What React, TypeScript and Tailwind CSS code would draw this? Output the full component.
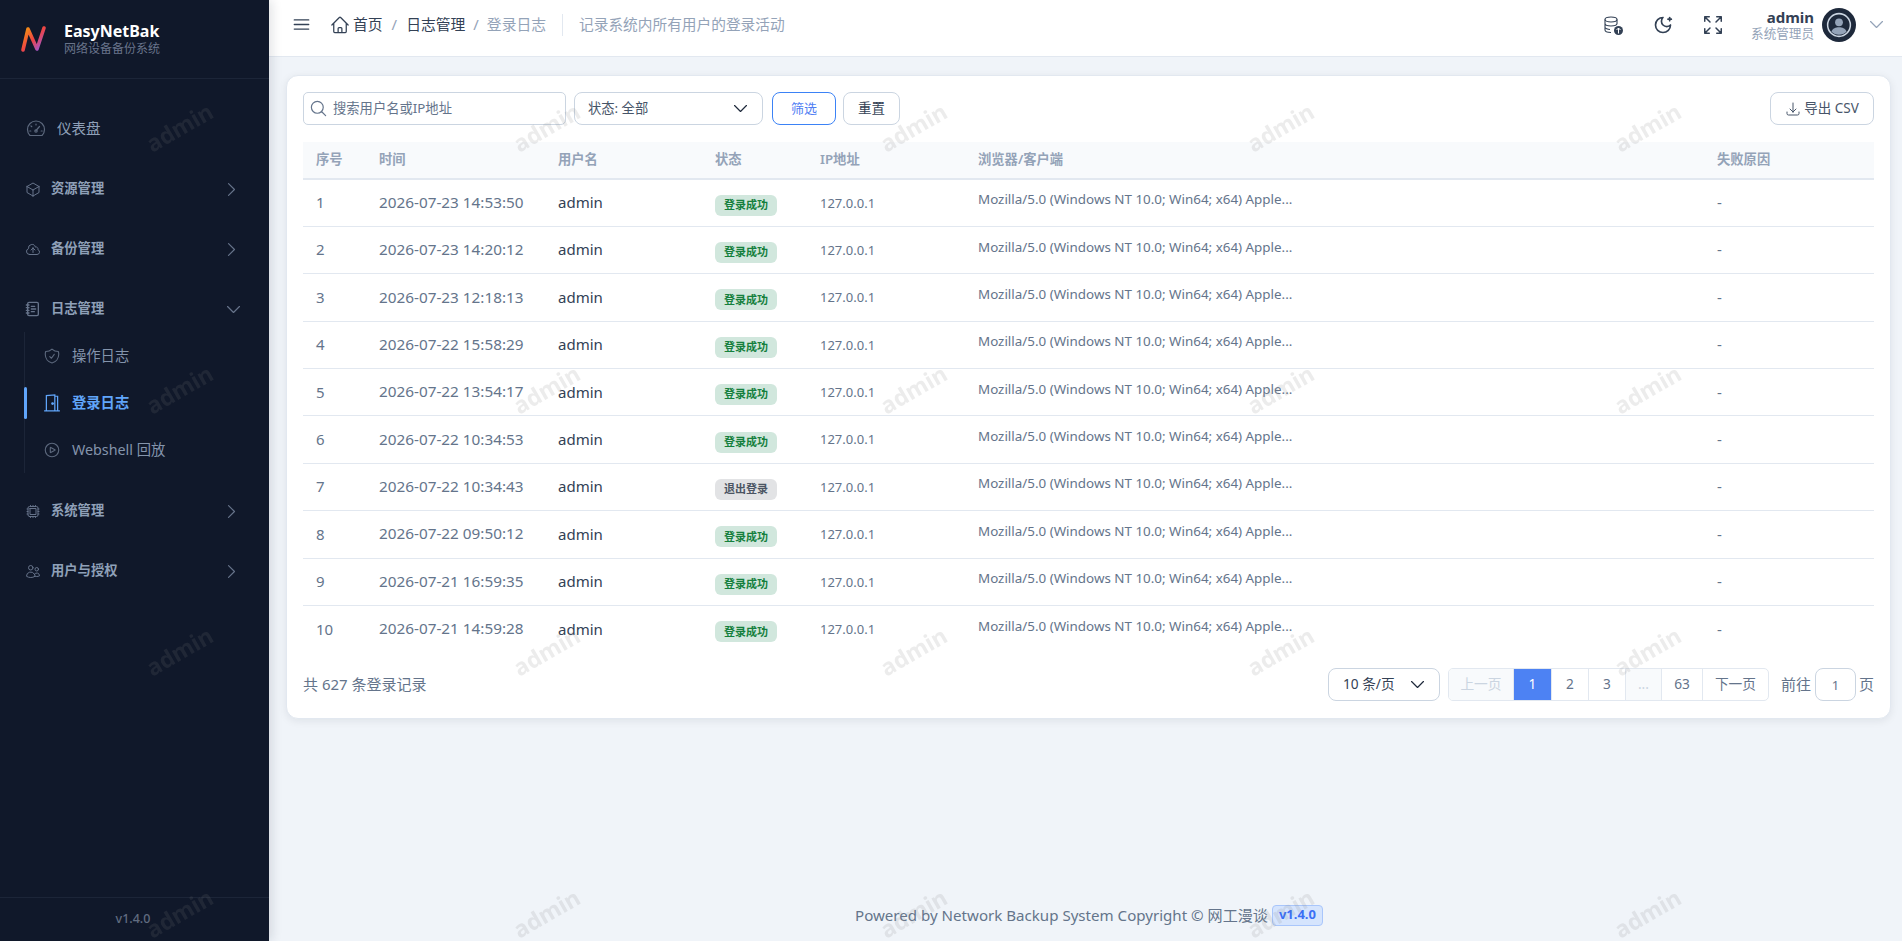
import { ReactNode } from 'react';
import {
  HiOutlineArrowDownTray,
  HiOutlineArrowsPointingOut,
  HiOutlineBars3,
  HiOutlineChevronDown,
  HiOutlineChevronRight,
  HiOutlineCloudArrowUp,
  HiOutlineCpuChip,
  HiOutlineCube,
  HiOutlineHome,
  HiOutlineMagnifyingGlass,
  HiOutlinePlayCircle,
  HiOutlineShieldCheck,
  HiOutlineUsers,
} from 'react-icons/hi2';
import { LuMoonStar, LuNotebookText } from 'react-icons/lu';

const logs = [
  ['1', '2026-07-23 14:53:50', '登录成功'],
  ['2', '2026-07-23 14:20:12', '登录成功'],
  ['3', '2026-07-23 12:18:13', '登录成功'],
  ['4', '2026-07-22 15:58:29', '登录成功'],
  ['5', '2026-07-22 13:54:17', '登录成功'],
  ['6', '2026-07-22 10:34:53', '登录成功'],
  ['7', '2026-07-22 10:34:43', '退出登录'],
  ['8', '2026-07-22 09:50:12', '登录成功'],
  ['9', '2026-07-21 16:59:35', '登录成功'],
  ['10', '2026-07-21 14:59:28', '登录成功'],
];

function GaugeIcon() {
  return (
    <svg viewBox="0 0 20 20" className="w-[20px] h-[20px]" fill="none" stroke="currentColor" strokeWidth="1.2" strokeLinecap="round">
      <path d="M4 16.5h12a8.500 8.500 0 1 0-12 0Z" />
      <path d="M10 11.500l3.500-4M10 5v1M5 7l.8.7M3.800 12h1M15.200 12h1" />
      <circle cx="10" cy="12" r="1.200" />
    </svg>
  );
}

function DoorIcon() {
  return (
    <svg viewBox="0 0 16 16" className="w-[18px] h-[18px]" fill="none" stroke="currentColor" strokeWidth="1.100">
      <path d="M1 15h14M3 15V1.500L10.500.8V15M10.500 2H13v13" />
      <circle cx="8.500" cy="8.500" r=".7" fill="currentColor" />
    </svg>
  );
}

function NavGroup({ icon, label, open }: { icon: ReactNode; label: string; open?: boolean }) {
  return (
    <div className="h-[60px] flex items-center pl-[25px] pr-[28px] text-[#8fa0b8]">
      <span className="w-[16px] flex justify-center text-[#66738a] text-[21px]">{icon}</span>
      <span className="ml-[10px] text-[13.300px] font-semibold flex-1">{label}</span>
      {open ? (
        <HiOutlineChevronDown className="text-[#66738a] text-[19px] -mr-[2px]" />
      ) : (
        <HiOutlineChevronRight className="text-[#66738a] text-[19px]" />
      )}
    </div>
  );
}

function SubItem({ icon, label, active }: { icon: ReactNode; label: string; active?: boolean }) {
  return (
    <div className={`relative h-[47px] flex items-center pl-[18px] text-[14.300px] ${active ? 'text-[#60a5fa] font-bold' : 'text-[#8494ac]'}`}>
      {active && <span className="absolute -left-px top-[8px] w-[3px] h-[32px] rounded-sm bg-[#60a5fa]" />}
      <span className={`w-[18px] flex justify-center text-[22px] ${active ? 'text-[#60a5fa]' : 'text-[#5c687d]'}`}>{icon}</span>
      <span className="ml-[11px]">{label}</span>
    </div>
  );
}

function Sidebar() {
  return (
    <aside className="w-[269px] shrink-0 h-full bg-[#10182a] flex flex-col shadow-[3px_0_10px_rgba(15,23,42,0.12)] z-10">
      <div className="h-[79px] shrink-0 border-b border-[#1c2538] flex items-center pl-[20px]">
        <svg viewBox="0 0 28 28" className="w-[28px] h-[28px]" fill="none">
          <defs>
            <linearGradient id="logo" x1="0" y1="0" x2="1" y2="1">
              <stop offset="0" stopColor="#f59e0b" />
              <stop offset="0.5" stopColor="#ef4444" />
              <stop offset="1" stopColor="#8b5cf6" />
            </linearGradient>
          </defs>
          <path d="M3 25 8 4l9 20L24 3" stroke="url(#logo)" strokeWidth="3.600" strokeLinejoin="round" strokeLinecap="round" />
        </svg>
        <div className="ml-[16px] -mt-[2px]">
          <div className="text-white text-[16px] font-bold leading-[20px]">EasyNetBak</div>
          <div className="text-[#69748a] text-[12px] leading-[15px]">网络设备备份系统</div>
        </div>
      </div>
      <nav className="flex-1 pt-[20px]">
        <div className="h-[60px] flex items-center pl-[26px] text-[#8fa0b8]">
          <span className="text-[#5c687d]"><GaugeIcon /></span>
          <span className="ml-[11px] text-[14.500px]">仪表盘</span>
        </div>
        <NavGroup icon={<HiOutlineCube />} label="资源管理" />
        <NavGroup icon={<HiOutlineCloudArrowUp />} label="备份管理" />
        <NavGroup icon={<LuNotebookText className="text-[16px]" />} label="日志管理" open />
        <div className="ml-[24px] mb-[8px] border-l border-[#1c2538] -mt-[7px]">
          <SubItem icon={<HiOutlineShieldCheck />} label="操作日志" />
          <SubItem icon={<DoorIcon />} label="登录日志" active />
          <SubItem icon={<HiOutlinePlayCircle />} label="Webshell 回放" />
        </div>
        <NavGroup icon={<HiOutlineCpuChip />} label="系统管理" />
        <NavGroup icon={<HiOutlineUsers />} label="用户与授权" />
      </nav>
      <div className="h-[44px] shrink-0 border-t border-[#1c2538] flex items-center justify-center pr-[3px] text-[#616c80] text-[12.500px] font-medium">
        v1.4.0
      </div>
    </aside>
  );
}

function Header() {
  return (
    <header className="h-[57px] shrink-0 bg-white border-b border-[#e2e8f0] flex items-center pl-[22px] pr-[16px] pb-[7px]">
      <HiOutlineBars3 className="text-[#334155] text-[21px]" />
      <HiOutlineHome className="ml-[18px] text-[#334155] text-[20px]" />
      <span className="ml-[3px] text-[14.800px] text-[#334155]">首页</span>
      <span className="mx-[9px] text-[14.800px] text-[#94a3b8]">/</span>
      <span className="text-[14.800px] text-[#334155]">日志管理</span>
      <span className="mx-[8px] text-[14.800px] text-[#94a3b8]">/</span>
      <span className="text-[14.800px] text-[#94a3b8]">登录日志</span>
      <span className="ml-[16px] w-px h-[22px] bg-[#e2e8f0]" />
      <span className="ml-[16px] text-[14.700px] text-[#94a3b8]">记录系统内所有用户的登录活动</span>
      <div className="ml-auto flex items-center">
        <span className="relative w-[18px] h-[18px]">
          <svg viewBox="0 0 18 18" className="w-[18px] h-[18px] text-[#334155]" fill="none" stroke="currentColor" strokeWidth="1.100">
            <ellipse cx="8" cy="3.500" rx="6" ry="2.500" />
            <path d="M2 3.500v10.500c0 1.400 2.700 2.500 6 2.500M14 3.500V8M2 7.500c0 1.400 2.700 2.500 6 2.500s6-1.100 6-2.500M2 11c0 1.400 2.700 2.500 5 2.500" />
          </svg>
          <span className="absolute right-[-2px] bottom-[-1px] w-[9px] h-[9px] rounded-full bg-[#334155] flex items-center justify-center">
            <svg viewBox="0 0 9 9" className="w-[9px] h-[9px]" fill="none" stroke="white" strokeWidth="1">
              <path d="M4.500 7.500V2M2.500 4l2-2 2 2" />
            </svg>
          </span>
        </span>
        <LuMoonStar className="ml-[32px] text-[#334155] text-[20px]" />
        <HiOutlineArrowsPointingOut className="ml-[28px] text-[#334155] text-[24px]" />
        <div className="ml-[26px] text-right">
          <div className="text-[15px] font-bold text-[#334155] leading-[18px]">admin</div>
          <div className="text-[12.600px] text-[#94a3b8] leading-[16px]">系统管理员</div>
        </div>
        <div className="ml-[8px] w-[34px] h-[34px] rounded-full bg-[#1e293b] flex items-center justify-center">
          <svg viewBox="0 0 24 24" className="w-[26px] h-[26px]" fill="none">
            <circle cx="12" cy="12" r="10.500" stroke="#cbd5e1" strokeWidth="1.400" />
            <circle cx="12" cy="9.500" r="3.600" fill="#94a3b8" />
            <path d="M5 18c1.200-3 4-4 7-4s5.800 1 7 4c-1.800 2-4.300 3-7 3s-5.200-1-7-3Z" fill="#94a3b8" />
          </svg>
        </div>
        <HiOutlineChevronDown className="ml-[11px] text-[#94a3b8] text-[19px]" />
      </div>
    </header>
  );
}

function StatusTag({ text }: { text: string }) {
  const ok = text === '登录成功';
  return (
    <span className={`inline-flex items-center justify-center w-[62px] h-[21px] rounded-[6px] text-[11px] font-bold ${ok ? 'bg-[#d1e7dd] text-[#15803d]' : 'bg-[#e2e3e5] text-[#4b5563]'}`}>
      {text}
    </span>
  );
}

function LogTable() {
  const headCell = 'pl-[13px] text-left font-semibold';
  return (
    <table className="w-full table-fixed border-collapse mt-[17px]">
      <colgroup>
        <col className="w-[63px]" />
        <col className="w-[179px]" />
        <col className="w-[157px]" />
        <col className="w-[105px]" />
        <col className="w-[158px]" />
        <col className="w-[739px]" />
        <col />
      </colgroup>
      <thead>
        <tr className="h-[37px] bg-[#f8fafc] border-b-2 border-[#e2e8f0] text-[13.300px] text-[#94a3b8]">
          <th className={headCell}>序号</th>
          <th className={headCell}>时间</th>
          <th className={headCell}>用户名</th>
          <th className={headCell}>状态</th>
          <th className={headCell}>IP地址</th>
          <th className={headCell}>浏览器/客户端</th>
          <th className={headCell}>失败原因</th>
        </tr>
      </thead>
      <tbody>
        {logs.map(([id, time, status]) => (
          <tr key={id} className="h-[47.400px] border-b border-[#e2e8f0] last:border-b-0">
            <td className="pl-[13px] pb-px text-[15px] text-[#64748b]">{id}</td>
            <td className="pl-[13px] pb-px text-[15.300px] text-[#64748b]">{time}</td>
            <td className="pl-[13px] pb-px text-[15px] text-[#334155]">admin</td>
            <td className="pl-[13px] pt-px"><StatusTag text={status} /></td>
            <td className="pl-[13px] pt-px text-[13px] text-[#64748b]">127.0.0.1</td>
            <td className="pl-[13px] pb-[7px] text-[13.400px] text-[#64748b]">Mozilla/5.0 (Windows NT 10.0; Win64; x64) Apple...</td>
            <td className="pl-[13px] pb-px text-[15px] text-[#64748b]">-</td>
          </tr>
        ))}
      </tbody>
    </table>
  );
}

function PageButton({ w, active, muted, children }: { w: string; active?: boolean; muted?: boolean; children: ReactNode }) {
  let color = 'text-[#64748b]';
  if (active) color = 'bg-[#4d82f3] text-white';
  if (muted) color = 'bg-[#f8fafc] text-[#cbd5e1]';
  return <span className={`${w} h-full flex items-center justify-center border-r border-[#e2e8f0] last:border-r-0 ${color}`}>{children}</span>;
}

function Footer() {
  return (
    <div className="mt-auto h-[50px] shrink-0 flex items-center justify-center text-[15.100px] text-[#64748b] pb-[2px] pl-[7px]">
      <span>Powered by Network Backup System Copyright © 网工漫谈</span>
      <span className="ml-[4px] h-[21px] px-[6px] rounded-[4px] border border-[#a9c6fb] bg-[#d5e4fd] text-[#3b6ff5] text-[13px] font-bold flex items-center">v1.4.0</span>
    </div>
  );
}

function Watermarks() {
  return (
    <div className="fixed inset-0 overflow-hidden pointer-events-none z-20">
      <div className="grid grid-cols-[repeat(5,367px)] auto-rows-[262px] -ml-[4px] -mt-[4px]">
        {Array.from({ length: 20 }).map((_, i) => (
          <div key={i} className="flex items-center justify-center">
            <span className="-rotate-[30deg] text-[23px] font-bold text-[#80808026]">admin</span>
          </div>
        ))}
      </div>
    </div>
  );
}

export default function App() {
  return (
    <div className="relative h-[941px] flex overflow-hidden bg-[#f0f4f9] font-['Noto_Sans','Noto_Sans_CJK_SC',sans-serif]">
      <Sidebar />
      <main className="flex-1 min-w-0 flex flex-col">
        <Header />
        <section className="ml-[17px] mr-[11px] mt-[18px] h-[644px] rounded-[12px] bg-white border border-[#e2e8f0] shadow-[0_2px_8px_rgba(15,23,42,0.08)] px-[16px] pt-[16px]">
          <div className="flex items-center h-[33px]">
            <div className="w-[263px] h-[33px] flex items-center border border-[#cbd5e1] rounded-[5px] pl-[5px] text-[13.300px] text-[#64748b]">
              <HiOutlineMagnifyingGlass className="text-[#64748b] text-[19px]" />
              <span className="ml-[5px]">搜索用户名或IP地址</span>
            </div>
            <div className="ml-[8px] w-[189px] h-[33px] flex items-center justify-between border border-[#cbd5e1] rounded-[8px] pl-[13px] pr-[12px] text-[13.300px] text-[#475569]">
              <span>状态: 全部</span>
              <HiOutlineChevronDown className="text-[#1e293b] text-[19px]" />
            </div>
            <button className="ml-[9px] w-[64px] h-[33px] rounded-[8px] border border-[#3b82f6] text-[13px] text-[#4f7df3]">筛选</button>
            <button className="ml-[7px] w-[57px] h-[33px] rounded-[8px] border border-[#cbd5e1] text-[13.500px] text-[#334155]">重置</button>
            <button className="ml-auto w-[104px] h-[33px] rounded-[8px] border border-[#cbd5e1] flex items-center justify-center text-[13.500px] text-[#475569]">
              <HiOutlineArrowDownTray className="text-[16px] mr-[3px]" />
              导出 CSV
            </button>
          </div>
          <LogTable />
          <div className="mt-[15px] h-[33px] flex items-center text-[15px] text-[#64748b]">
            <span>共 627 条登录记录</span>
            <div className="ml-auto w-[112px] h-[33px] flex items-center justify-between border border-[#cbd5e1] rounded-[8px] pl-[14px] pr-[12px] text-[#334155] text-[13.700px]">
              <span>10 条/页</span>
              <HiOutlineChevronDown className="text-[#1e293b] text-[19px]" />
            </div>
            <div className="ml-[8px] h-[33px] flex items-stretch border border-[#e2e8f0] rounded-[5px] overflow-hidden text-[13.700px]">
              <PageButton w="w-[65px]" muted>上一页</PageButton>
              <PageButton w="w-[38px]" active>1</PageButton>
              <PageButton w="w-[37px]">2</PageButton>
              <PageButton w="w-[37px]">3</PageButton>
              <PageButton w="w-[36px]" muted>...</PageButton>
              <PageButton w="w-[41px]">63</PageButton>
              <PageButton w="w-[65px]">下一页</PageButton>
            </div>
            <span className="ml-[12px]">前往</span>
            <span className="ml-[4px] w-[41px] h-[33px] flex items-center justify-center border border-[#cbd5e1] rounded-[8px] text-[13px] pt-[2px]">1</span>
            <span className="ml-[3px]">页</span>
          </div>
        </section>
        <Footer />
      </main>
      <Watermarks />
    </div>
  );
}
